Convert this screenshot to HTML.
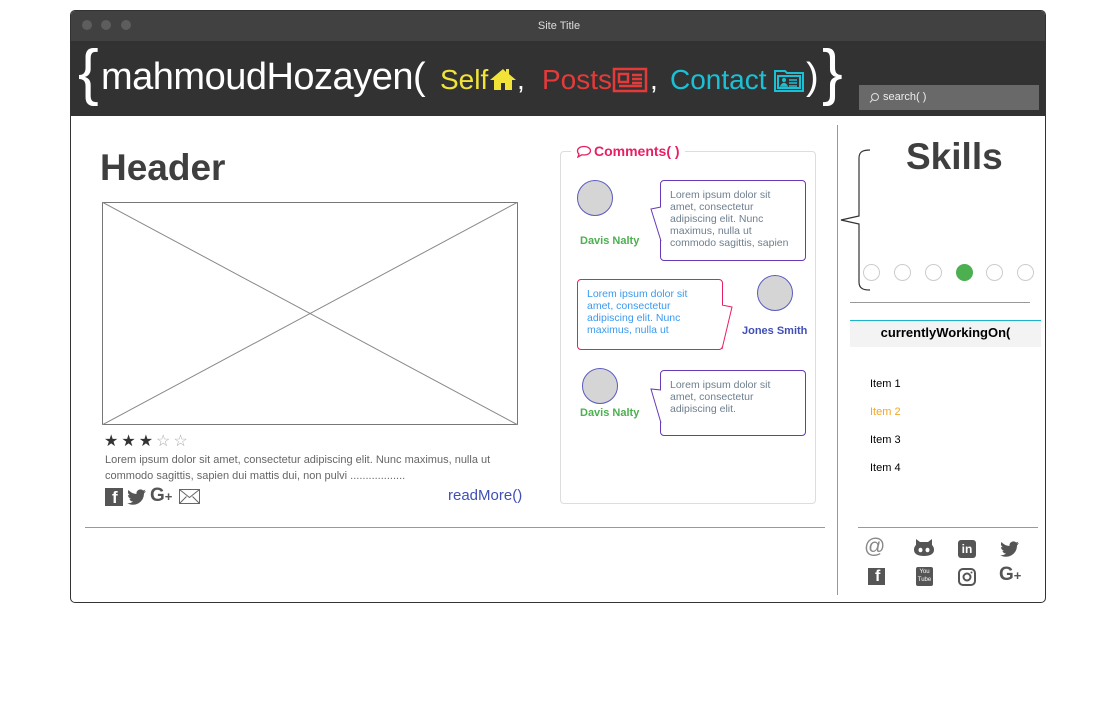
<!DOCTYPE html>
<html><head><meta charset="utf-8"><style>
*{margin:0;padding:0;box-sizing:border-box}
body{width:1097px;height:712px;background:#fff;font-family:"Liberation Sans",sans-serif;position:relative;overflow:hidden}
.a{position:absolute}
.win{left:70px;top:10px;width:976px;height:593px;border:1px solid #333;border-radius:5px;overflow:hidden}
.tb{left:0;top:0;width:976px;height:30px;background:#414141;color:#ddd;font-size:11px;text-align:center;line-height:30px}
.dot{top:9px;width:10px;height:10px;border-radius:50%;background:#5d5d5d}
.hb{left:0;top:30px;width:976px;height:75px;background:#333232}
.c{font-size:12px;line-height:12px}
.bub{border-radius:4px;background:#fff;padding:8px 9px;font-size:10.5px;line-height:12px}
.av{width:36px;height:36px;border-radius:50%;background:#d5d5d5;border:1px solid #5a5ac0}
.sd{width:17px;height:17px;border-radius:50%;border:1px solid #ccc;top:264px}
.it{font-size:11px;left:870px}
</style></head><body>
<div class="a win">
<div class="a tb">Site Title</div>
<div class="a dot" style="left:11px"></div><div class="a dot" style="left:30px"></div><div class="a dot" style="left:50px"></div>
<div class="a hb"></div>
</div>
<div class="a" style="left:78px;top:38px;color:#fff;font-size:62px;font-weight:300;line-height:70px">{</div>
<div class="a" style="left:101px;top:55px;color:#fff;font-size:38px;line-height:44px;letter-spacing:-0.5px">mahmoudHozayen(</div>
<div class="a" style="left:440px;top:62px;color:#f1e337;font-size:28px;line-height:36px">Self</div>
<svg class="a" style="left:489px;top:67px" width="28" height="24" viewBox="0 0 28 24"><path d="M14 2L1 13h4v10h7v-7h4v7h7V13h4L20 7V2h-3v3z" fill="#f1e337"/></svg>
<div class="a" style="left:517px;top:62px;color:#fff;font-size:28px;line-height:36px">,</div>
<div class="a" style="left:542px;top:62px;color:#e53a3a;font-size:28px;line-height:36px">Posts</div>
<svg class="a" style="left:612px;top:67px" width="36" height="26" viewBox="0 0 36 26"><g fill="none" stroke="#e53a3a" stroke-width="2.5"><rect x="2" y="2" width="32" height="22"/><rect x="7" y="7" width="9" height="8"/><path d="M20 8h10M20 12h10M20 16h10M7 19h23"/></g></svg>
<div class="a" style="left:650px;top:62px;color:#fff;font-size:28px;line-height:36px">,</div>
<div class="a" style="left:670px;top:62px;color:#1cc0d4;font-size:28px;line-height:36px">Contact</div>
<svg class="a" style="left:773px;top:67px" width="32" height="26" viewBox="0 0 32 26"><g fill="none" stroke="#1cc0d4" stroke-width="2"><path d="M2 4h10l2 2h16v18H2z"/><rect x="5" y="9" width="22" height="12"/></g><circle cx="11" cy="13" r="2" fill="#1cc0d4"/><path d="M8 19q3-5 6 0zM16 13h8M16 16h8M16 19h8" stroke="#1cc0d4" stroke-width="1.5" fill="#1cc0d4"/></svg>
<div class="a" style="left:806px;top:55px;color:#fff;font-size:38px;line-height:44px">)</div>
<div class="a" style="left:822px;top:38px;color:#fff;font-size:62px;font-weight:300;line-height:70px">}</div>
<div class="a" style="left:859px;top:85px;width:180px;height:25px;background:#6a696a;color:#eee;font-size:11px;line-height:25px;padding-left:24px">search( )</div>
<svg class="a" style="left:869px;top:92px" width="12" height="12"><circle cx="6" cy="5" r="3.5" fill="none" stroke="#ddd"/><path d="M3.5 7.5L1 10.5" stroke="#ddd"/></svg>

<div class="a" style="left:100px;top:147px;font-size:37px;font-weight:bold;color:#3f3f3f">Header</div>
<svg class="a" style="left:102px;top:202px" width="416" height="223"><rect x="0.5" y="0.5" width="415" height="222" fill="#fff" stroke="#777"/><path d="M0 0L416 223M416 0L0 223" stroke="#888"/></svg>
<div class="a" style="left:104px;top:431px;font-size:16px;letter-spacing:3px;color:#333">★★★<span style="color:#aaa">☆☆</span></div>
<div class="a" style="left:105px;top:452px;width:420px;font-size:11px;line-height:16px;color:#666">Lorem ipsum dolor sit amet, consectetur adipiscing elit. Nunc maximus, nulla ut commodo sagittis, sapien dui mattis dui, non pulvi ..................</div>
<div class="a" style="left:105px;top:488px;width:18px;height:18px;background:#555"></div>
<div class="a" style="left:112px;top:488px;color:#fff;font-weight:bold;font-size:17px">f</div>
<svg class="a" style="left:127px;top:488px" width="20" height="18"><path d="M19 3l-2 .6 1.5-2-2.3.9A4 4 0 009.5 6 11 11 0 011.5 2a4 4 0 001.2 5.3L1 7a4 4 0 003.2 3.9H2.4a4 4 0 003.7 2.7A8 8 0 010 15a11 11 0 0017-9.5z" fill="#555"/></svg>
<div class="a" style="left:150px;top:485px;color:#555;font-size:19px;font-weight:bold">G<span style="font-size:13px">+</span></div>
<svg class="a" style="left:179px;top:489px" width="22" height="16"><rect x=".5" y=".5" width="20" height="14" fill="none" stroke="#666"/><path d="M.5 .5l10 8 10-8M.5 14.5l7-7M20.5 14.5l-7-7" stroke="#666" fill="none"/></svg>
<div class="a" style="left:448px;top:487px;color:#3f4fb5;font-size:15px">readMore()</div>

<div class="a" style="left:560px;top:151px;width:256px;height:353px;border:1px solid #ddd;border-radius:4px"></div>
<div class="a" style="left:571px;top:143px;background:#fff;padding:0 5px;color:#e91e63;font-weight:bold;font-size:14px">
<svg width="18" height="13" style="vertical-align:-2px"><path d="M8 1.5c4 0 6.5 2 6.5 4.3S12 10 8 10c-.8 0-1.5 0-2.2-.2L2 12l1-3C2 8.3 1.5 7 1.5 5.8 1.5 3.5 4 1.5 8 1.5z" fill="none" stroke="#e91e63" stroke-width="1.3"/></svg>Comments( )</div>
<div class="a av" style="left:577px;top:180px"></div>
<div class="a c" style="left:580px;top:235px;color:#4caf50;font-weight:bold;font-size:11px">Davis Nalty</div>
<div class="a bub" style="left:660px;top:180px;width:146px;height:81px;border:1px solid #673ab7;color:#6e7f8e;overflow:hidden">Lorem ipsum dolor sit amet, consectetur adipiscing elit. Nunc maximus, nulla ut commodo sagittis, sapien</div>
<svg class="a" style="left:650px;top:205px" width="12" height="36"><path d="M11 2L1 4l10 32" fill="#fff" stroke="#673ab7"/></svg>
<div class="a bub" style="left:577px;top:279px;width:146px;height:71px;border:1px solid #e91e63;color:#3a9af0">Lorem ipsum dolor sit amet, consectetur adipiscing elit. Nunc maximus, nulla ut</div>
<svg class="a" style="left:720px;top:305px" width="14" height="46"><path d="M2 0l10 2L2 44" fill="#fff" stroke="#e91e63"/></svg>
<div class="a av" style="left:757px;top:275px"></div>
<div class="a c" style="left:742px;top:325px;color:#3f4fb5;font-weight:bold;font-size:11px">Jones Smith</div>
<div class="a av" style="left:582px;top:368px"></div>
<div class="a c" style="left:580px;top:407px;color:#4caf50;font-weight:bold;font-size:11px">Davis Nalty</div>
<div class="a bub" style="left:660px;top:370px;width:146px;height:66px;border:1px solid #673ab7;color:#6e7f8e">Lorem ipsum dolor sit amet, consectetur adipiscing elit.</div>
<svg class="a" style="left:650px;top:388px" width="12" height="36"><path d="M11 2L1 1l10 34" fill="#fff" stroke="#673ab7"/></svg>

<div class="a" style="left:85px;top:527px;width:740px;height:1px;background:#999"></div>
<div class="a" style="left:837px;top:125px;width:1px;height:470px;background:#999"></div>

<div class="a" style="left:906px;top:136px;font-size:37px;font-weight:bold;color:#3f3f3f">Skills</div>
<svg class="a" style="left:838px;top:148px" width="34" height="144"><path d="M32 2c-6 0-11 1-11 8v58L3 72l18 4v58c0 7 5 8 11 8" fill="none" stroke="#333" stroke-width="1.2"/></svg>
<div class="a sd" style="left:863px"></div><div class="a sd" style="left:894px"></div><div class="a sd" style="left:925px"></div>
<div class="a sd" style="left:956px;background:#4caf50;border-color:#4caf50"></div><div class="a sd" style="left:986px"></div><div class="a sd" style="left:1017px"></div>
<div class="a" style="left:850px;top:302px;width:180px;height:1px;background:#999"></div>
<div class="a" style="left:850px;top:320px;width:191px;height:27px;background:#f3f3f3;border-top:1px solid #1cb4cc;text-align:center;font-weight:bold;font-size:13px;line-height:24px">currentlyWorkingOn(</div>
<div class="a it" style="top:378px">Item 1</div>
<div class="a it" style="top:406px;color:#f5a623">Item 2</div>
<div class="a it" style="top:434px">Item 3</div>
<div class="a it" style="top:462px">Item 4</div>
<div class="a" style="left:858px;top:527px;width:180px;height:1px;background:#999"></div>
<div class="a" style="left:864px;top:535px;font-size:21px;color:#888">@</div>
<svg class="a" style="left:914px;top:539px" width="20" height="17"><path d="M2 0l4 3h8l4-3v6c2 2 2 4 2 5 0 4-4 6-10 6S0 15 0 11c0-1 0-3 2-5z" fill="#555"/><ellipse cx="6.5" cy="11" rx="2" ry="2.3" fill="#fff"/><ellipse cx="13.5" cy="11" rx="2" ry="2.3" fill="#fff"/></svg>
<div class="a" style="left:958px;top:540px;width:18px;height:18px;background:#555;border-radius:3px;color:#fff;font-weight:bold;font-size:12px;line-height:18px;text-align:center">in</div>
<svg class="a" style="left:1000px;top:541px" width="20" height="16"><path d="M19 2l-2 .6 1.5-2-2.3.9A4 4 0 009.5 5 11 11 0 011.5 1a4 4 0 001.2 5.3L1 6a4 4 0 003.2 3.9H2.4a4 4 0 003.7 2.7A8 8 0 010 14a11 11 0 0017-9.5z" fill="#555"/></svg>
<div class="a" style="left:868px;top:568px;width:17px;height:17px;background:#555"></div>
<div class="a" style="left:875px;top:568px;color:#fff;font-weight:bold;font-size:16px">f</div>
<div class="a" style="left:916px;top:567px;width:17px;height:19px;background:#555;border-radius:2px;color:#fff;font-size:6px;line-height:8px;text-align:center;padding-top:1px">You<br>Tube</div>
<svg class="a" style="left:958px;top:568px" width="18" height="18"><rect x="1" y="1" width="16" height="16" rx="4" fill="none" stroke="#555" stroke-width="2"/><circle cx="9" cy="9" r="3.5" fill="none" stroke="#555" stroke-width="2"/><circle cx="13.5" cy="4.5" r="1" fill="#555"/></svg>
<div class="a" style="left:999px;top:564px;color:#555;font-size:19px;font-weight:bold">G<span style="font-size:13px">+</span></div>
</body></html>
